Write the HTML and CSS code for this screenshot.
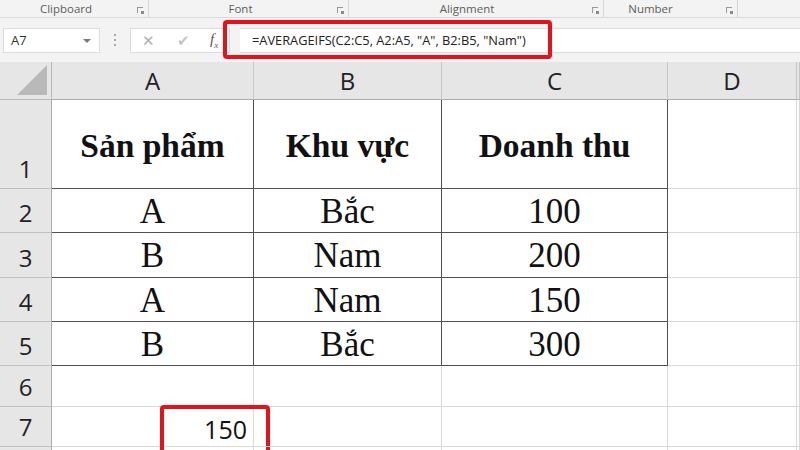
FILE: index.html
```html
<!DOCTYPE html>
<html lang="vi">
<head>
  <meta charset="UTF-8">
  <title>AVERAGEIFS</title>
  <link rel="stylesheet" href="styles.css">
</head>
<body>
  <div class="ribbon">
    <div class="group g-clip">Clipboard<span class="launcher"></span></div>
    <div class="group g-font">Font<span class="launcher"></span></div>
    <div class="group g-align">Alignment<span class="launcher"></span></div>
    <div class="group g-num">Number<span class="launcher"></span></div>
    <div class="group g-rest"></div>
  </div>

  <div class="formula-bar">
    <div class="name-box">A7<span class="caret"></span></div>
    <div class="dots"><i></i><i></i><i></i></div>
    <div class="fx-buttons">
      <span class="cancel">&#x2715;</span>
      <span class="enter">&#x2714;</span>
      <span class="fx">f<sub>x</sub></span>
    </div>
    <div class="formula">=AVERAGEIFS(C2:C5, A2:A5, "A", B2:B5, "Nam")</div>
    <div class="mark mark-formula"></div>
  </div>

  <div class="sheet">
    <div class="corner"><span class="tri"></span></div>
    <div class="col-head">A</div>
    <div class="col-head">B</div>
    <div class="col-head">C</div>
    <div class="col-head">D</div>
    <div class="col-head"></div>

    <div class="row-head">1</div>
    <div class="cell tb th">Sản phẩm</div>
    <div class="cell tb th">Khu vực</div>
    <div class="cell tb th">Doanh thu</div>
    <div class="cell"></div>
    <div class="cell"></div>

    <div class="row-head">2</div>
    <div class="cell tb">A</div>
    <div class="cell tb">Bắc</div>
    <div class="cell tb">100</div>
    <div class="cell"></div>
    <div class="cell"></div>

    <div class="row-head">3</div>
    <div class="cell tb">B</div>
    <div class="cell tb">Nam</div>
    <div class="cell tb">200</div>
    <div class="cell"></div>
    <div class="cell"></div>

    <div class="row-head">4</div>
    <div class="cell tb">A</div>
    <div class="cell tb">Nam</div>
    <div class="cell tb">150</div>
    <div class="cell"></div>
    <div class="cell"></div>

    <div class="row-head">5</div>
    <div class="cell tb">B</div>
    <div class="cell tb">Bắc</div>
    <div class="cell tb">300</div>
    <div class="cell"></div>
    <div class="cell"></div>

    <div class="row-head">6</div>
    <div class="cell"></div>
    <div class="cell"></div>
    <div class="cell"></div>
    <div class="cell"></div>
    <div class="cell"></div>

    <div class="row-head">7</div>
    <div class="cell num">150<div class="mark mark-cell"></div></div>
    <div class="cell"></div>
    <div class="cell"></div>
    <div class="cell"></div>
    <div class="cell"></div>

    <div class="row-head"></div>
    <div class="cell"></div>
    <div class="cell"></div>
    <div class="cell"></div>
    <div class="cell"></div>
    <div class="cell"></div>
  </div>
</body>
</html>
```

FILE: styles.css
```css
body {
  margin: 0;
  width: 800px;
  height: 450px;
  overflow: hidden;
  background: #ffffff;
  font-family: 'Open Sans', 'Noto Sans', sans-serif;
  color: #222;
}

/* ribbon group captions */
.ribbon {
  display: flex;
  height: 17px;
  background: #f3f3f3;
  border-bottom: 1px solid #dadada;
}

.group {
  position: relative;
  box-sizing: border-box;
  height: 17px;
  font-size: 11.5px;
  line-height: 17px;
  color: #5e5e5e;
  text-align: center;
  border-right: 1px solid #d6d6d6;
  padding-right: 16px;
}

.g-clip { width: 149px; }
.g-font { width: 200px; }
.g-align { width: 255px; padding-right: 18px; }
.g-num { width: 134px; padding-right: 40px; }
.g-rest { flex: 1; border-right: none; }

.launcher {
  position: absolute;
  right: 5px;
  top: 7px;
  width: 5px;
  height: 5px;
  border-left: 1px solid #9a9a9a;
  border-top: 1px solid #9a9a9a;
}

.launcher::after {
  content: "";
  position: absolute;
  right: -1px;
  bottom: -1px;
  width: 3px;
  height: 3px;
  background: #8a8a8a;
}

/* formula bar */
.formula-bar {
  position: relative;
  display: flex;
  align-items: center;
  height: 44px;
  background: #f3f3f3;
}

.name-box {
  position: relative;
  box-sizing: border-box;
  width: 97px;
  height: 25px;
  margin-left: 3px;
  padding-left: 7px;
  background: #fff;
  border: 1px solid #dcdcdc;
  font-size: 13px;
  line-height: 23px;
  color: #333;
}

.caret {
  position: absolute;
  right: 8px;
  top: 10px;
  border-left: 4px solid transparent;
  border-right: 4px solid transparent;
  border-top: 4px solid #7a7a7a;
}

.dots {
  display: flex;
  flex-direction: column;
  gap: 3px;
  width: 30px;
  align-items: center;
}

.dots i {
  width: 2px;
  height: 2px;
  background: #a8a8a8;
}

.fx-buttons {
  box-sizing: border-box;
  display: flex;
  align-items: center;
  width: 100px;
  height: 25px;
  background: #fff;
  border: 1px solid #dcdcdc;
  font-size: 15px;
  color: #b0b0b0;
}

.cancel { margin-left: 11px; }
.enter { margin-left: 22px; color: #c4c4c4; }

.fx {
  margin-left: 20px;
  font-family: 'Liberation Serif', serif;
  font-style: italic;
  font-size: 15px;
  color: #555;
}

.fx sub {
  font-size: 9px;
}

.formula {
  box-sizing: border-box;
  flex: 1;
  height: 25px;
  margin-left: 10px;
  padding-left: 12px;
  background: #fff;
  border-top: 1px solid #dcdcdc;
  border-bottom: 1px solid #dcdcdc;
  font-size: 12.8px;
  line-height: 23px;
  color: #222;
}

.mark {
  position: absolute;
  box-sizing: border-box;
  border: 4px solid #e5121a;
  border-radius: 4px;
}

.mark-formula {
  left: 223px;
  top: 2px;
  width: 329px;
  height: 39px;
}

/* worksheet grid */
.sheet {
  display: grid;
  grid-template-columns: 52px 202px 188px 226px 129px 3px;
  grid-template-rows: 38px 89px 44px 45px 44px 44px 41px 40px 20px;
}

.corner {
  position: relative;
  box-sizing: border-box;
  background: #e6e6e6;
  border-right: 1px solid #b8b8b8;
  border-bottom: 1px solid #b8b8b8;
}

.tri {
  position: absolute;
  right: 4px;
  bottom: 4px;
  border-left: 30px solid transparent;
  border-bottom: 30px solid #b9b9b9;
}

.col-head {
  box-sizing: border-box;
  display: flex;
  align-items: center;
  justify-content: center;
  background: #e6e6e6;
  border-right: 1px solid #c6c6c6;
  border-bottom: 1px solid #acacac;
  font-size: 24px;
  color: #222;
}

.row-head {
  box-sizing: border-box;
  display: flex;
  align-items: flex-end;
  justify-content: center;
  padding-bottom: 5px;
  background: #e6e6e6;
  border-right: 1px solid #acacac;
  border-bottom: 1px solid #c2c2c2;
  font-size: 24px;
  line-height: 28px;
  color: #222;
}

.cell {
  position: relative;
  box-sizing: border-box;
  display: flex;
  align-items: center;
  justify-content: center;
  border-right: 1px solid #d9d9d9;
  border-bottom: 1px solid #d9d9d9;
  font-family: 'Liberation Serif', serif;
  font-size: 35px;
  color: #111;
}

.cell.tb {
  border-right-color: #505050;
  border-bottom-color: #505050;
  padding-top: 2px;
}

.cell.th {
  font-weight: bold;
  font-size: 33.5px;
  padding-top: 4px;
}

.cell.num {
  justify-content: flex-end;
  padding-right: 6px;
  padding-top: 4px;
  font-family: 'Open Sans', 'Noto Sans', sans-serif;
  font-size: 25px;
}

.mark-cell {
  left: 108px;
  top: -2px;
  width: 110px;
  height: 70px;
}
```
